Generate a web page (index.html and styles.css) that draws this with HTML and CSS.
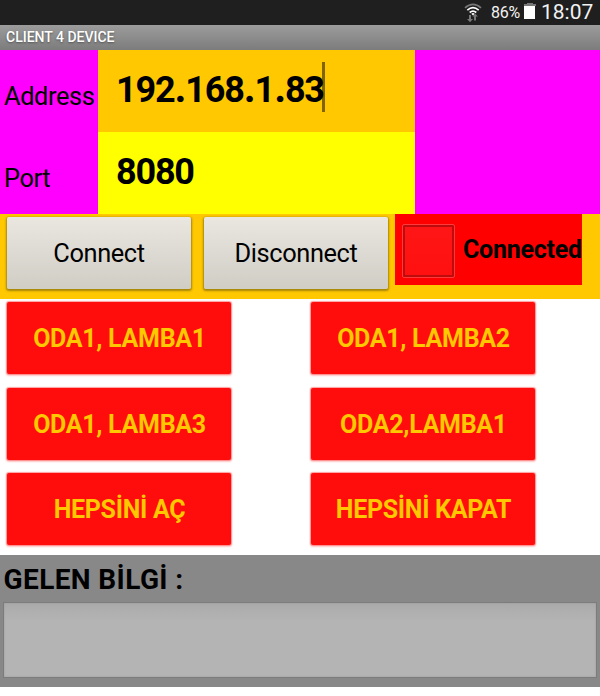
FILE: index.html
```html
<!DOCTYPE html>
<html lang="tr">
<head>
<meta charset="utf-8">
<title>CLIENT 4 DEVICE</title>
<link rel="stylesheet" href="styles.css">
</head>
<body>
<header class="status">
  <svg class="wifi" width="18" height="20" viewBox="0 0 18 20" fill="none">
    <path d="M1 4.8Q9-2.2 17 4.8" stroke="#777" stroke-width="1.7"/>
    <path d="M3.3 7.2Q9 2.2 14.7 7.2M5.7 9.5Q9 6.7 12.3 9.5" stroke="#fff" stroke-width="1.7"/>
    <path d="M7.3 10.8Q9 9.3 10.7 10.8L9 12.6Z" fill="#fff"/>
    <path d="M5 12h2v4h2l-3 3.3L3 16h2zM10 17.5v-4H8.5L11 10.5l3 3h-2v4z" fill="#777"/>
  </svg>
  <span class="percent">86%</span>
  <svg class="battery" width="12" height="17" viewBox="0 0 12 17"><path d="M3 0h6v1h3v2H0V1h3z" fill="#777"/><path d="M0 3h11v13H0z" fill="#fff"/></svg>
  <time class="clock">18:07</time>
</header>
<h1 class="title"><span>CLIENT 4 DEVICE</span></h1>
<section class="fields">
  <label class="label">Address</label>
  <div class="value host"><span>192<b class="dot">.</b>168<b class="dot">.</b>1<b class="dot">.</b>83</span><i class="caret"></i></div>
  <label class="label">Port</label>
  <div class="value port"><span>8080</span></div>
</section>
<section class="connection">
  <button class="btn grey"><span>Connect</span></button>
  <button class="btn grey"><span>Disconnect</span></button>
  <div class="state"><i class="box"></i><span>Connected</span></div>
</section>
<main class="lamps">
  <button class="btn red"><span>ODA1, LAMBA1</span></button>
  <button class="btn red"><span>ODA1, LAMBA2</span></button>
  <button class="btn red"><span>ODA1, LAMBA3</span></button>
  <button class="btn red"><span>ODA2,LAMBA1</span></button>
  <button class="btn red"><span>HEPSİNİ AÇ</span></button>
  <button class="btn red"><span>HEPSİNİ KAPAT</span></button>
</main>
<section class="info">
  <h2 class="info-title"><span>GELEN BİLGİ :</span></h2>
  <div class="output"></div>
</section>
</body>
</html>
```
FILE: styles.css
```css
* { box-sizing: border-box; }
body { margin: 0; width: 600px; height: 696px; overflow: hidden; background: #fff; color: #000; font-family: Roboto, "Liberation Sans", sans-serif; font-size: 25.4px; letter-spacing: -0.4px; }
span, time { white-space: nowrap; }
.status { height: 25px; background: #1f1f1f; color: #f2f2f2; display: flex; padding-left: 464px; letter-spacing: 0; }
.wifi { margin-top: 3px; flex: none; }
.percent { margin: 0 0 0 9px; width: 33px; font-size: 16px; line-height: 25px; letter-spacing: -0.3px; }
.battery { margin-top: 3px; flex: none; }
.clock { margin-left: 5px; font-size: 21px; line-height: 24px; }
.title { margin: 0; height: 25px; padding-left: 6px; background: linear-gradient(#9c9c9c, #7c7c7c); color: #fff; font-size: 14px; line-height: 25px; font-weight: 500; letter-spacing: 0; text-shadow: 0 1px 2px #555; }
.fields { display: grid; grid-template-columns: 98px 317px; grid-template-rows: 82px 82px; background: #f0f; }
.label { padding: 32px 0 0 4px; line-height: 29px; }
.value { display: flex; padding: 12px 0 0 18px; font-size: 36px; font-weight: 700; line-height: 56px; letter-spacing: -1.2px; }
.dot { margin: 0 0.5px 0 0.7px; }
.host { background: #ffc800; }
.port { background: #ff0; }
.caret { width: 3px; height: 50px; margin-left: -2px; background: rgba(0,0,0,.5); }
.connection { height: 85px; background: #ffc800; display: flex; padding-left: 7px; }
.btn { border: 0; padding: 0 0 1px; font-family: inherit; font-size: 25.4px; letter-spacing: -0.4px; color: #000; display: flex; align-items: center; justify-content: center; }
.grey { width: 184px; height: 72px; margin: 3px 13px 0 0; border-radius: 2px; background: linear-gradient(#e9e7e0, #cfcdc4); box-shadow: 0 1px 2px 1px rgba(80,70,20,.5); }
.grey + .grey { margin-right: 7px; }
.state { width: 187px; height: 71px; background: #f00; display: flex; font-size: 25px; letter-spacing: -0.25px; font-weight: 700; line-height: 71px; }
.box { width: 53px; height: 54px; margin: 10px 8px 0 7px; border: 1px solid #ff3a3a; background: linear-gradient(#ff1616, #ff1010); box-shadow: inset 0 0 0 2px #be0c0c; border-radius: 2px; flex: none; }
.lamps { height: 256px; padding: 3px 0 0 7px; display: grid; grid-template-columns: 224px 224px; grid-template-rows: 72px 72px 72px; column-gap: 80px; row-gap: 13.5px; align-content: start; }
.red { padding: 1px 0 0 1px; background: #ff0d0d; color: #ffc800; font-size: 25px; letter-spacing: -0.3px; font-weight: 700; border-radius: 2px; box-shadow: 0 0 1px 1px rgba(255,60,60,.45), 0 1px 2px 1px rgba(255,0,0,.2); }
.info { height: 132px; background: #888; padding: 0 3px; }
.info-title { margin: 0; height: 47px; font-size: 28px; font-weight: 700; line-height: 50px; padding-left: 0.5px; letter-spacing: 0.4px; }
.output { height: 76px; border: 1px solid #7c7c7c; background: linear-gradient(#aaa, #b4b4b4 18px); box-shadow: inset 0 0 2px #999; }
```
